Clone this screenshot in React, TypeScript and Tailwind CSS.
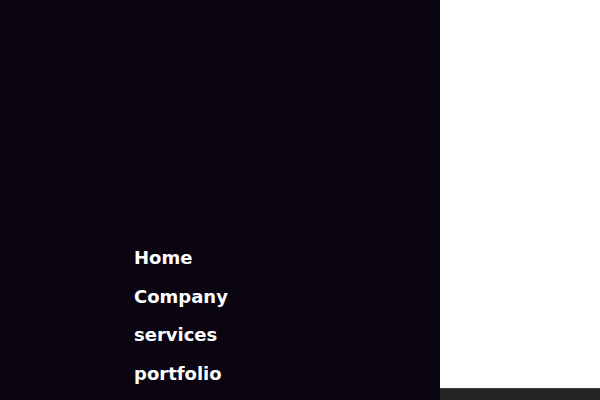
const links = ['Home', 'Company', 'services', 'portfolio']

export default function App() {
  return (
    <div className="flex h-[400px] w-[600px] overflow-hidden" style={{ fontFamily: '"DejaVu Sans", sans-serif' }}>
      <nav className="h-full w-[440px] shrink-0 bg-[#0a0511]">
        <ul className="pl-[134px] pt-[239px]">
          {links.map((l) => (
            <li key={l} className="h-[38.5px] text-[18px] font-bold leading-[38.5px] text-white">
              {l}
            </li>
          ))}
        </ul>
      </nav>
      <div className="flex flex-1 flex-col">
        <div className="flex-1 bg-white" />
        <div className="h-[12px] border-t border-[#3c3c3c] bg-[#232425]" />
      </div>
    </div>
  )
}
